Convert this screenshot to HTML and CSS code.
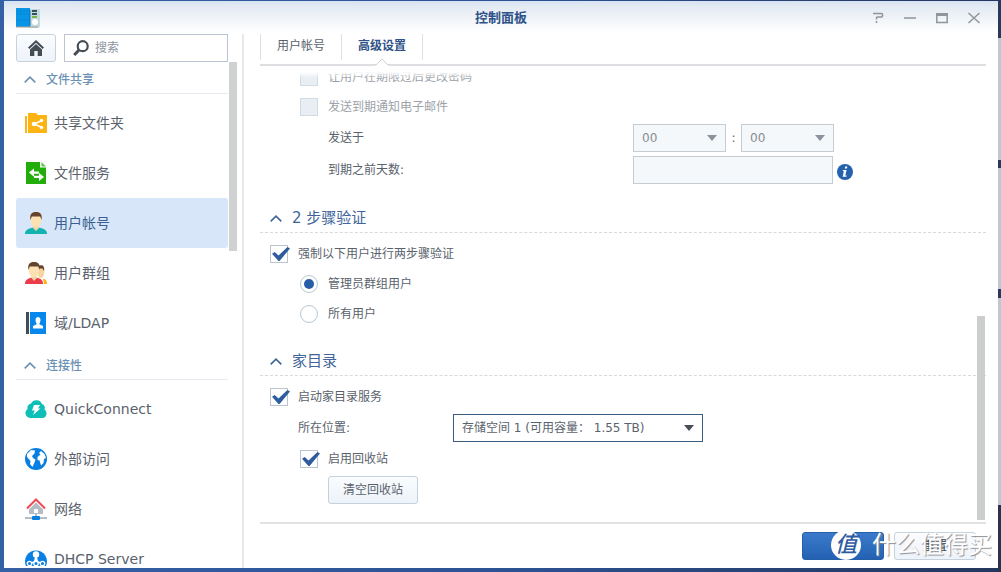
FILE: index.html
```html
<!DOCTYPE html>
<html lang="zh-CN">
<head>
<meta charset="utf-8">
<meta name="viewport" content="width=device-width, initial-scale=1">
<title>控制面板</title>
<link rel="stylesheet" href="styles.css">
</head>
<body>
<div class="window">
  <header class="titlebar">
    <svg class="app-icon" viewBox="0 0 24 22" aria-hidden="true">
      <path d="M13 2h11v18l-2 1H13z" fill="#c3d9e2"/>
      <path d="M0 1h14v19H0z" fill="#0795e5"/>
      <path d="M1 4h12M1 7h12M1 13h12" stroke="#0a7fd0" stroke-dasharray="2 1"/>
      <path d="M0 20h22" stroke="#a8a091" stroke-width="1"/>
      <path d="M16 4h5M16 7h5" stroke="#34505f" stroke-width="2"/>
      <path d="M16 10h5" stroke="#7db446" stroke-width="2"/>
      <circle cx="19" cy="15" r="3" fill="#fff"/>
      <path d="M14 3v16" stroke="#1d6fae"/>
    </svg>
    <h1 class="title">控制面板</h1>
    <div class="window-tools">
      <button class="tool" type="button" aria-label="帮助"><svg viewBox="0 0 12 12"><path d="M1 1.500h8.500a1 1 0 0 1 1 1v1.500a1 1 0 0 1-1 1H5.500a1 1 0 0 0-1 1V7.500M4.500 9v2" /></svg></button>
      <button class="tool" type="button" aria-label="最小化"><svg viewBox="0 0 12 12"><path d="M0 6h12"/></svg></button>
      <button class="tool" type="button" aria-label="最大化"><svg viewBox="0 0 12 12"><path d="M.8 2h10.400v8.500H.8z"/><path d="M0 2.500h12" stroke-width="3"/></svg></button>
      <button class="tool" type="button" aria-label="关闭"><svg viewBox="0 0 12 12"><path d="M.5 1l11 10M11.500 1l-11 10"/></svg></button>
    </div>
  </header>

  <div class="body">
    <aside class="sidebar">
      <div class="search-row">
        <button class="home" type="button" aria-label="主页">
          <svg viewBox="0 0 16 16" width="16" height="16"><path d="M8 0l8 7.600-1.400 1.300L8 2.800 1.400 8.900 0 7.600z"/><path d="M2 9.600L8 4l6 5.600V16H9.700v-5H6.300v5H2z"/></svg>
        </button>
        <label class="search">
          <svg viewBox="0 0 16 16" width="16" height="16"><circle cx="9.700" cy="6.200" r="5" fill="none" stroke="#454d54" stroke-width="2.200"/><path d="M6 10l-4.800 5" stroke="#454d54" stroke-width="3"/></svg>
          <input type="text" placeholder="搜索" aria-label="搜索">
        </label>
      </div>
      <nav class="nav">
        <h2 class="group"><svg class="chevron" viewBox="0 0 12 7"><path d="M.7 6.300L6 1.200l5.300 5.100"/></svg>文件共享</h2>
        <ul class="items">
          <li><a class="item" href="#share"><svg class="icon" viewBox="0 0 22 22"><path d="M3 1h8l2 2h9v18H3z" fill="#fcb415"/><path d="M0 4h2v17H0z" fill="#fcb415"/><path d="M17 8.500l-8 3.500 8 3.500" fill="none" stroke="#fff" stroke-width="1.500"/><circle cx="9" cy="12" r="2.300" fill="#fff"/><circle cx="16.500" cy="8.500" r="1.700" fill="#fff"/><circle cx="16.500" cy="15.500" r="1.700" fill="#fff"/></svg>共享文件夹</a></li>
          <li><a class="item" href="#files"><svg class="icon" viewBox="0 0 22 22"><path d="M1 0h14v5.500h6V22H1z" fill="#23ad0b"/><path d="M16.500 0L21 4.500h-4.500z" fill="#5cc64b"/><path d="M4 10.500l5-4v3h5v2.200H9v3z" fill="#fff"/><path d="M19 15l-5 4v-3H9v-2.200h5V11z" fill="#fff"/></svg>文件服务</a></li>
          <li><a class="item selected" href="#user" aria-current="page"><svg class="icon" viewBox="0 0 22 22"><path d="M0 22c0-4 3-5.500 8-6.500h6c5 1 8 2.500 8 6.500z" fill="#12b3b0"/><path d="M7.500 15.500L9 13h4l1.500 2.500L11 19z" fill="#f3d3a4"/><path d="M6 4h10c1 8-2 11.500-5 11.500S5 12 6 4z" fill="#fde1b3"/><path d="M5.500 8C4.500 2.500 6.500 0 11 0s6.500 2.500 5.500 8l-1.300-3.500H6.800z" fill="#65442d"/></svg>用户帐号</a></li>
          <li><a class="item" href="#group"><svg class="icon" viewBox="0 0 22 22"><path d="M18 16.500c3 1 4 2.500 4 5.500h-3z" fill="#fcb415"/><path d="M13 6h6c1 6-.5 10-3.500 10S13 12 13 6z" fill="#f8d4a0"/><path d="M13 4c4-2 7-.5 6 5l-1.500-2.500H14z" fill="#65442d"/><path d="M0 22c0-4 2.500-5.500 6.500-6.500h5C16 16.500 18 18 18 22z" fill="#ea3c4b"/><path d="M6 15.500L7.500 13h3.300l1.600 2.500L9 19z" fill="#f3d3a4"/><path d="M4 4h10c1 8-2 11.500-5 11.500S3 12 4 4z" fill="#fde1b3"/><path d="M3.500 8C2.500 2.500 4.500 0 9 0s6.500 2.500 5.500 8l-1.300-3.500H4.800z" fill="#65442d"/></svg>用户群组</a></li>
          <li><a class="item" href="#ldap"><svg class="icon" viewBox="0 0 22 22"><path d="M1 0h3v22H1z" fill="#434d57"/><path d="M5 0h16v22H5z" fill="#0787ec"/><path d="M10.500 8c0-4 5-4 5 0 0 2-1 3-1.200 4.200L18 14v2.500H8V14l3.700-1.800C11.500 11 10.500 10 10.500 8z" fill="#fff"/></svg>域/LDAP</a></li>
        </ul>
        <h2 class="group"><svg class="chevron" viewBox="0 0 12 7"><path d="M.7 6.300L6 1.200l5.300 5.100"/></svg>连接性</h2>
        <ul class="items">
          <li><a class="item" href="#quickconnect"><svg class="icon" viewBox="0 0 22 22"><path d="M5 20a5 5 0 0 1-2.500-9A4.500 4.500 0 0 1 6 5.500 6 6 0 0 1 17 6a4 4 0 0 1 2.500 5.500A4.700 4.700 0 0 1 17.500 20z" fill="#0ebfb8"/><path d="M9 7h6l-2 3.500h2.500L8 17l1.800-4.500H7z" fill="#fff"/></svg>QuickConnect</a></li>
          <li><a class="item" href="#external"><svg class="icon" viewBox="0 0 22 22"><circle cx="11" cy="11" r="11" fill="#087fe3"/><path d="M2 6l4-4 4 .5-.5 3L7 8l1 2 2.500 1.500-1 3L7.500 19 5 16l.5-3L2 9z" fill="#fff"/><path d="M12.500 9l3-2.500L14 5l2-2 3.500 3 1.500 4-2 1-.5 4-2.500 2.500-1.500-5-2-.5z" fill="#fff"/></svg>外部访问</a></li>
          <li><a class="item" href="#network"><svg class="icon" viewBox="0 0 22 22"><path d="M4 9l7-6 7 6v7H4z" fill="#b4bdc5"/><path d="M9 11h4v4H9z" fill="#fff"/><path d="M2 10.500L11 1.500l9 9" fill="none" stroke="#fff" stroke-width="4"/><path d="M2 10.500L11 1.500l9 9" fill="none" stroke="#ee4a52" stroke-width="2"/><path d="M10 16h2v3h-2zM0 19h22v2H0z" fill="#b4bdc5"/><rect x="7" y="18" width="8" height="4" rx="1" fill="#087fe3"/></svg>网络</a></li>
          <li><a class="item" href="#dhcp"><svg class="icon" viewBox="0 0 22 22"><path d="M1 18a11 11 0 1 1 20 0z" fill="#087fe3"/><circle cx="11" cy="6.500" r="3.200" fill="#fff"/><path d="M10 9h2l1 4 4 2-1 1-5-2-5 2-1-1 4-2z" fill="#fff"/><g fill="#087fe3" stroke="#fff" stroke-width="1.300"><circle cx="4.500" cy="15.500" r="2.200"/><circle cx="11" cy="15.500" r="2.200"/><circle cx="17.500" cy="15.500" r="2.200"/></g></svg>DHCP Server</a></li>
        </ul>
      </nav>
      <span class="side-thumb"></span>
    </aside>

    <main class="main">
      <nav class="tabs">
        <a class="tab" href="#accounts">用户帐号</a>
        <a class="tab active" href="#advanced">高级设置<svg class="notch" viewBox="0 0 14 8"><path d="M0 7.500h1L7 1.500l6 6h1V8H0z" fill="#fff"/><path d="M0 6.500h1.500L7 1l5.500 5.500H14" fill="none" stroke="#cdd0d4"/></svg></a>
      </nav>

      <form class="panel" id="settings">
        <div class="row indent">
          <input class="check" type="checkbox" id="c1" disabled><label class="off" for="c1">让用户在期限过后更改密码</label>
        </div>
        <div class="row indent">
          <input class="check" type="checkbox" id="c2" disabled><label class="off" for="c2">发送到期通知电子邮件</label>
        </div>
        <div class="row field deep">
          <label class="wide" for="hour">发送于</label>
          <select class="select time" id="hour" disabled><option>00</option></select>
          <span class="colon">:</span>
          <select class="select time" id="minute" aria-label="分钟" disabled><option>00</option></select>
        </div>
        <div class="row field deep">
          <label class="wide" for="days">到期之前天数:</label>
          <input class="text" type="text" id="days" disabled>
          <svg class="info" viewBox="0 0 16 16"><circle cx="8" cy="8" r="8" fill="#2462ae"/><path d="M8.200 2.500h2.200l-.5 2H7.700zM6 6h3.600l-1.300 5.600h1.400l-.3 1.200H5.600L6.900 7.200H5.700z" fill="#fff"/></svg>
        </div>

        <h2 class="section"><svg class="chevron" viewBox="0 0 12 7"><path d="M.7 6.300L6 1.200l5.300 5.100"/></svg>2 步骤验证</h2>
        <div class="row">
          <input class="check" type="checkbox" id="c3" checked><label for="c3">强制以下用户进行两步骤验证</label>
        </div>
        <div class="row indent">
          <input class="radio" type="radio" name="scope" id="r1" checked><label for="r1">管理员群组用户</label>
        </div>
        <div class="row indent">
          <input class="radio" type="radio" name="scope" id="r2"><label for="r2">所有用户</label>
        </div>

        <h2 class="section"><svg class="chevron" viewBox="0 0 12 7"><path d="M.7 6.300L6 1.200l5.300 5.100"/></svg>家目录</h2>
        <div class="row">
          <input class="check" type="checkbox" id="c4" checked><label for="c4">启动家目录服务</label>
        </div>
        <div class="row field shallow">
          <label class="narrow" for="volume">所在位置:</label>
          <select class="select volume" id="volume"><option>存储空间 1 (可用容量： 1.55 TB)</option></select>
        </div>
        <div class="row indent">
          <input class="check" type="checkbox" id="c5" checked><label for="c5">启用回收站</label>
        </div>
        <div class="row field deep">
          <button class="button" type="button">清空回收站</button>
        </div>
        <span class="main-thumb"></span>
      </form>

      <footer class="footer">
        <button class="button primary" type="submit" form="settings" aria-label="应用"></button>
        <button class="button reset" type="reset" form="settings">重置</button>
      </footer>
    </main>
  </div>
  <div class="watermark"><span class="seal">值</span><span class="brand">什么值得买</span></div>
</div>
<div class="desktop-edge"></div>
</body>
</html>
```

FILE: styles.css
```css
* { box-sizing: border-box; }

body {
  margin: 0;
  height: 100vh;
  display: flex;
  padding: 1px 0 4px 4px;
  overflow: hidden;
  background: linear-gradient(90deg, #3560a6, #2c5294 50%, #24365c);
  color: #59626c;
  font: 12px/18px "DejaVu Sans", "Noto Sans CJK SC", sans-serif;
}

input, select, button { font: inherit; color: inherit; margin: 0; }
h1, h2, ul { margin: 0; padding: 0; }
ul { list-style: none; }
a { color: inherit; text-decoration: none; }

.window {
  position: relative;
  flex: 1;
  min-width: 0;
  display: flex;
  flex-direction: column;
  background: #fff;
}

.desktop-edge {
  width: 3px;
  margin: -1px 0 -4px;
  background: linear-gradient(#26395c 38px, #bfc7d3 38px 160px, #26395c 160px 168px, #bfc7d3 168px 289px, #26395c 289px 298px, #bfc7d3 298px 505px, #26344f 505px);
}

.titlebar {
  display: grid;
  grid-template-columns: 1fr auto 1fr;
  align-items: center;
  height: 33px;
  padding: 0 12px;
  background: linear-gradient(#d6e2f4, #e3eaf2 5px, #fff 32px);
}
.app-icon { width: 24px; height: 22px; }
.title { color: #2f5388; font-size: 13px; font-weight: 700; }
.window-tools { display: flex; justify-content: flex-end; gap: 20px; padding-right: 6px; }
.tool { width: 12px; height: 12px; padding: 0; border: 0; background: none; }
.tool svg { display: block; fill: none; stroke: #8e959d; stroke-width: 1.5; }

.body { flex: 1; min-height: 0; display: flex; }

.sidebar {
  position: relative;
  width: 240px;
  flex: none;
  padding-left: 12px;
  overflow: hidden;
  border-right: 2px solid #e6e8ea;
}
.search-row { display: flex; gap: 8px; width: 212px; height: 28px; }
.home {
  display: grid;
  place-items: center;
  width: 40px;
  padding: 0;
  border: 1px solid #c5d1dd;
  border-radius: 3px;
  background: linear-gradient(#fafcfe, #edf3fa);
}
.home svg { fill: #454d54; }
.search {
  flex: 1;
  min-width: 0;
  display: flex;
  align-items: center;
  gap: 6px;
  padding-left: 8px;
  border: 1px solid #b9c6d1;
}
.search input { flex: 1; min-width: 0; padding: 0; border: 0; outline: 0; background: none; }
.search input::placeholder { color: #8d959d; opacity: 1; }
.nav { width: 212px; }
.group {
  display: flex;
  align-items: center;
  gap: 10px;
  height: 32px;
  padding: 4px 0 0 8px;
  border-bottom: 1px solid #e4eaef;
  color: #6a90b4;
  font-size: 12px;
  font-weight: 500;
}
.chevron { width: 12px; height: 7px; fill: none; stroke: currentColor; stroke-width: 1.6; }
.items { padding-top: 4px; }
.item {
  display: flex;
  align-items: center;
  gap: 7px;
  height: 50px;
  padding-left: 9px;
  border-radius: 3px;
  font-size: 14px;
}
.item.selected { background: #d7e6f8; color: #3b5f92; }
.icon { width: 22px; height: 22px; }
.side-thumb {
  position: absolute;
  top: 28px;
  right: 5px;
  width: 8px;
  height: 189px;
  background: #d0d2d2;
}

.main {
  flex: 1;
  min-width: 0;
  display: flex;
  flex-direction: column;
  padding: 0 12px 0 16px;
}
.tabs { display: flex; height: 32px; border-bottom: 2px solid #dcdee1; }
.tab {
  position: relative;
  padding: 3px 16px 0;
  height: 26px;
  border-right: 1px solid #dcdfe3;
}
.tab:first-child { border-left: 1px solid #dcdfe3; }
.tab.active { color: #2f5388; font-weight: 700; }
.notch { position: absolute; left: calc(50% - 7px); top: 24px; width: 14px; height: 8px; }

.panel {
  position: relative;
  flex: 1;
  min-height: 0;
  display: flex;
  flex-direction: column;
  justify-content: flex-end;
  padding-bottom: 16px;
  overflow: hidden;
}
.panel::before {
  content: "";
  position: absolute;
  z-index: 1;
  inset: 0 0 auto;
  height: 12px;
  background: linear-gradient(#fff 6px, #fff0);
}
.row { display: flex; align-items: center; gap: 10px; flex: none; height: 30px; padding-left: 10px; }
.indent { padding-left: 40px; }
.field { gap: 0; height: 32px; }
.deep { padding-left: 68px; }
.shallow { padding-left: 38px; }
.off { color: #9ba2a9; }
.wide { width: 305px; }
.narrow { width: 155px; }
.colon { width: 15px; text-align: center; }

.section {
  display: flex;
  align-items: center;
  gap: 10px;
  flex: none;
  height: 29px;
  margin: 18px 0 6px;
  padding-left: 10px;
  border-bottom: 1px dashed #d5dade;
  color: #41659a;
  font-size: 15px;
  font-weight: 400;
}

.check, .radio {
  appearance: none;
  position: relative;
  flex: none;
  width: 18px;
  height: 18px;
  border: 1px solid #b9c6d1;
  background: #fff;
}
.check:disabled { background: #e9eef5; border-color: #d0dbe4; }
.check:checked::after {
  content: "";
  position: absolute;
  left: 1px;
  top: 1px;
  width: 18px;
  height: 14px;
  background: #2f5c9f;
  clip-path: polygon(0 48%, 15% 36%, 36% 60%, 86% 0, 100% 10%, 42% 100%, 36% 100%);
}
.radio { border-radius: 50%; }
.radio:checked::after {
  content: "";
  position: absolute;
  inset: 3px;
  border-radius: 50%;
  background: #2a5da8;
}

.select {
  appearance: none;
  height: 28px;
  padding: 0 24px 0 8px;
  border: 1px solid #3a5a80;
  border-radius: 0;
  background: #fff url("data:image/svg+xml,%3Csvg xmlns='http://www.w3.org/2000/svg' width='10' height='6'%3E%3Cpath d='M0 0h10L5 6z' fill='%23464e57'/%3E%3C/svg%3E") no-repeat right 8px center;
}
.time { width: 93px; }
.volume { width: 250px; }
.select:disabled, .text:disabled { border-color: #c5cdd3; background-color: #f5f8fa; color: #858c93; opacity: 1; }
.select:disabled {
  background-image: url("data:image/svg+xml,%3Csvg xmlns='http://www.w3.org/2000/svg' width='10' height='6'%3E%3Cpath d='M0 0h10L5 6z' fill='%238a929b'/%3E%3C/svg%3E");
}
.text { width: 200px; height: 28px; border: 1px solid #c5cdd3; }
.info { width: 16px; height: 16px; margin: 4px 0 0 4px; }

.button {
  height: 28px;
  min-width: 82px;
  padding: 0 14px;
  border: 1px solid #c5d1dd;
  border-radius: 3px;
  background: linear-gradient(#fafcfe, #edf3fa);
}
.primary { border-color: #2460a8; background: linear-gradient(#3b7acb, #2461b2); }
.main-thumb {
  position: absolute;
  right: 1px;
  bottom: 2px;
  width: 8px;
  height: 204px;
  background: #cccdcd;
}

.footer {
  display: flex;
  justify-content: flex-end;
  gap: 10px;
  height: 46px;
  padding: 8px 10px 0 0;
  border-top: 2px solid #e0e2e4;
}
.reset { color: #333a42; }

.watermark {
  position: absolute;
  right: 6px;
  bottom: 7px;
  display: flex;
  align-items: center;
  gap: 11px;
  pointer-events: none;
}
.seal {
  width: 30px;
  height: 30px;
  border-radius: 50%;
  background: #fff;
  color: #2f5c9f;
  font-size: 22px;
  font-style: italic;
  font-weight: 500;
  line-height: 29px;
  text-align: center;
}
.brand {
  color: #fff;
  font-size: 24px;
  line-height: 32px;
  text-shadow: 1px 1px 1px #8a8f96;
}
```
